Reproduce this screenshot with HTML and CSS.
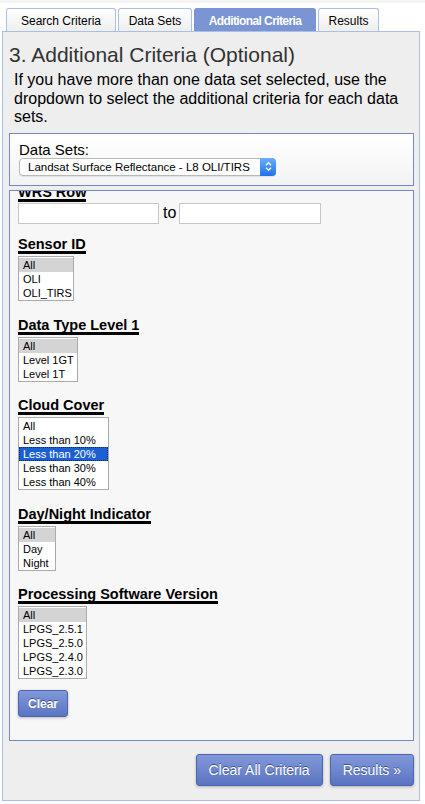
FILE: index.html
```html
<!DOCTYPE html>
<html lang="en">
<head>
<meta charset="utf-8">
<title>Additional Criteria</title>
<link rel="stylesheet" href="styles.css">
</head>
<body>
<div class="topstrip"></div>
<div class="page">
  <div class="tabs">
    <div class="tab tab-search">Search Criteria</div>
    <div class="tab tab-datasets">Data Sets</div>
    <div class="tab tab-additional active">Additional Criteria</div>
    <div class="tab tab-results">Results</div>
  </div>
  <div class="panel">
    <h1 class="title">3. Additional Criteria (Optional)</h1>
    <p class="intro">If you have more than one data set selected, use the dropdown to select the additional criteria for each data sets.</p>

    <div class="datasets">
      <div class="ds-label">Data Sets:</div>
      <div class="select">
        <span class="select-text">Landsat Surface Reflectance - L8 OLI/TIRS</span>
        <span class="select-arrow">
          <svg width="7" height="11" viewBox="0 0 7 11"><path d="M1 4.2 L3.5 1.7 L6 4.2" fill="none" stroke="#fff" stroke-width="1.3"/><path d="M1 6.8 L3.5 9.3 L6 6.8" fill="none" stroke="#fff" stroke-width="1.3"/></svg>
        </span>
      </div>
    </div>

    <div class="criteria">
      <div class="field field-wrs">
        <span class="fh">WRS Row</span>
        <div class="range">
          <span class="input"></span>
          <span class="to">to</span>
          <span class="input input-2"></span>
        </div>
      </div>

      <div class="field field-first">
        <span class="fh">Sensor ID</span>
        <div class="list list-sensor">
          <div class="opt sel-gray">All</div>
          <div class="opt">OLI</div>
          <div class="opt">OLI_TIRS</div>
        </div>
      </div>

      <div class="field">
        <span class="fh">Data Type Level 1</span>
        <div class="list list-dtype">
          <div class="opt sel-gray">All</div>
          <div class="opt">Level 1GT</div>
          <div class="opt">Level 1T</div>
        </div>
      </div>

      <div class="field">
        <span class="fh">Cloud Cover</span>
        <div class="list list-cloud">
          <div class="opt">All</div>
          <div class="opt">Less than 10%</div>
          <div class="opt sel-blue">Less than 20%</div>
          <div class="opt">Less than 30%</div>
          <div class="opt">Less than 40%</div>
        </div>
      </div>

      <div class="field">
        <span class="fh">Day/Night Indicator</span>
        <div class="list list-day">
          <div class="opt sel-gray">All</div>
          <div class="opt">Day</div>
          <div class="opt">Night</div>
        </div>
      </div>

      <div class="field">
        <span class="fh">Processing Software Version</span>
        <div class="list list-proc">
          <div class="opt sel-gray">All</div>
          <div class="opt">LPGS_2.5.1</div>
          <div class="opt">LPGS_2.5.0</div>
          <div class="opt">LPGS_2.4.0</div>
          <div class="opt">LPGS_2.3.0</div>
        </div>
      </div>

      <button class="btn btn-small">Clear</button>
    </div>

    <div class="actions">
      <button class="btn btn-big">Clear All Criteria</button>
      <button class="btn btn-big">Results &raquo;</button>
    </div>
  </div>
</div>
</body>
</html>
```

FILE: styles.css
```css
html, body {
  margin: 0;
  padding: 0;
  background: #fff;
  font-family: "Liberation Sans", Arial, Helvetica, sans-serif;
  color: #000;
}

.topstrip {
  height: 3px;
  background: #f4f4f4;
}

.page {
  padding: 5px 0 0 2px;
}

.tabs {
  display: flex;
  gap: 2px;
  padding-left: 4px;
  height: 23px;
}

.tab {
  box-sizing: border-box;
  height: 23px;
  border: 1px solid #a9bfe3;
  border-bottom: none;
  border-radius: 3px 3px 0 0;
  background: linear-gradient(#ffffff, #eeeeee);
  font-size: 12px;
  display: flex;
  align-items: center;
  justify-content: center;
  padding-top: 1px;
  color: #000;
}

.tab-search { width: 110px; }
.tab-datasets { width: 74px; }
.tab-additional { width: 122px; }
.tab-results { width: 61px; }

.tab.active {
  background: #7a94d4;
  border-color: #7a94d4;
  color: #fff;
  font-weight: bold;
  letter-spacing: -0.6px;
}

.panel {
  box-sizing: border-box;
  width: 418px;
  height: 770px;
  border: 1px solid #a9bfe3;
  background: #eeeeee;
  padding: 11px 5px 0 6px;
}

.title {
  margin: 0;
  font-size: 21px;
  line-height: 24px;
  font-weight: normal;
  color: #333;
}

.intro {
  margin: 4px 0 0 5px;
  font-size: 16px;
  line-height: 18.5px;
  color: #000;
}

.datasets {
  box-sizing: border-box;
  height: 53px;
  margin-top: 6px;
  border: 1px solid #7489c2;
  background: linear-gradient(#ffffff, #f3f3f3);
  padding: 7px 9px 0;
}

.ds-label {
  font-size: 15px;
  line-height: 17px;
}

.select {
  box-sizing: border-box;
  width: 257px;
  height: 18px;
  border: 1px solid #b9b9b9;
  border-radius: 4px;
  background: #fff;
  display: flex;
  align-items: center;
  padding-left: 8px;
  font-size: 11.5px;
  box-shadow: 0 1px 1px rgba(0, 0, 0, 0.08);
}

.select-text {
  white-space: nowrap;
}

.select-arrow {
  margin: -1px -1px -1px auto;
  align-self: stretch;
  width: 16px;
  border-radius: 0 4px 4px 0;
  background: linear-gradient(#6aaeff, #1f72ea);
  display: flex;
  align-items: center;
  justify-content: center;
}

.criteria {
  box-sizing: border-box;
  height: 551px;
  margin-top: 4px;
  border: 1px solid #7489c2;
  background: #f7f7f7;
  padding: 0 8px;
  overflow: hidden;
  display: flex;
  flex-direction: column;
  align-items: flex-start;
}

.field {
  display: flex;
  flex-direction: column;
  align-items: flex-start;
  margin-top: 17.5px;
}

.field-wrs {
  margin-top: -5px;
}

.field-first {
  margin-top: 14.5px;
}

.fh {
  display: inline-block;
  font-weight: bold;
  font-size: 14.5px;
  line-height: 13px;
  border-bottom: 3px solid #000;
  white-space: nowrap;
}

.range {
  display: flex;
  align-items: center;
  margin-top: 1px;
  height: 21px;
}

.input {
  box-sizing: border-box;
  width: 141px;
  height: 21px;
  border: 1px solid #c6c6c6;
  background: #fff;
}

.input-2 {
  width: 142px;
}

.to {
  font-size: 16px;
  margin: 0 3px 0 4px;
}

.list {
  box-sizing: border-box;
  margin-top: 2px;
  border: 1px solid #ababab;
  background: #fff;
  padding-top: 1px;
}

.list-sensor { width: 56px; }
.list-dtype { width: 60px; }
.list-cloud { width: 91px; }
.list-day { width: 38px; }
.list-proc { width: 69px; }

.opt {
  height: 14px;
  line-height: 14px;
  font-size: 11px;
  padding-left: 4px;
  white-space: nowrap;
  box-sizing: border-box;
}

.sel-gray {
  background: #d4d4d4;
}

.sel-blue {
  background: #1c5fd3;
  color: #fff;
  outline: 1px dotted #0a2a6a;
  outline-offset: -1px;
}

.btn {
  box-sizing: border-box;
  border: 1px solid #4b64b0;
  border-radius: 3px;
  background: linear-gradient(#8199da, #5a74c1);
  color: #fff;
  font-family: "Liberation Sans", Arial, Helvetica, sans-serif;
  text-shadow: 0 -1px 0 rgba(20, 30, 80, 0.55);
  box-shadow: 0 1px 3px rgba(0, 0, 0, 0.25);
  cursor: pointer;
  padding: 0;
}

.btn-small {
  margin-top: 11px;
  width: 50px;
  height: 27px;
  font-size: 12px;
  font-weight: bold;
}

.actions {
  display: flex;
  justify-content: flex-end;
  gap: 7px;
  margin-top: 13px;
}

.btn-big {
  height: 32px;
  padding: 0 12px;
  font-size: 14px;
}
```
